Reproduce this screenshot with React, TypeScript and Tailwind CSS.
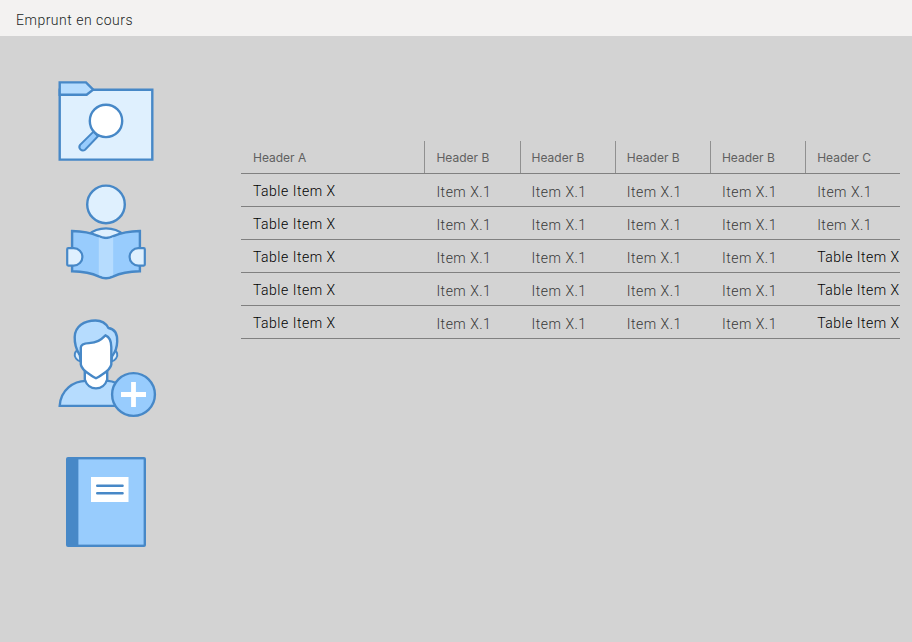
import React from "react";

const BLUE = "#4788c7";

function FolderSearchIcon() {
  return (
    <svg className="block h-[100px] w-[115px]" viewBox="0 0 115 100" fill="none" stroke={BLUE} strokeWidth="2.4">
      <path d="M9.7 19.7H102.3V89.6H9.7Z" fill="#dff0fe" />
      <path d="M9.7 12.4H36L43.2 19.7L36.6 24.8H9.7Z" fill="#b6dcfe" />
      <path d="M43.5 61.6L30.1 74.9A3.5 3.5 0 0 0 35.1 79.7L48 66.2Z" fill="#98ccfd" strokeWidth="2" />
      <circle cx="56" cy="50.9" r="16.2" fill="#fff" />
    </svg>
  );
}

function ReaderIcon() {
  return (
    <svg className="block h-[110px] w-[115px]" viewBox="0 0 115 110" fill="none" stroke={BLUE} strokeWidth="2.4">
      <circle cx="56" cy="29.4" r="18.8" fill="#dff0fe" />
      <path d="M38 60C48 51.2 64 51.2 74 60L56 66Z" fill="#dff0fe" />
      <path d="M22.1 56C31 56.2 41 57.8 48 60.8Q52 63 56 63Q60 63 64 60.8C71 57.8 81 56.2 89.9 56V96.3C81 96.5 70 98.2 63.5 101.3Q59.5 103.2 56 103.2Q52.5 103.2 48.5 101.3C42 98.2 31 96.5 22.1 96.3Z" fill="#98ccfd" />
      <path d="M48.8 62.2Q52.5 64.2 56 64.2Q59.5 64.2 63.2 62.2V100Q59 102 56 102Q53 102 48.8 100Z" fill="#b6dcfe" stroke="none" />
      <path d="M18.2 73.2H23.7A8.7 8.7 0 0 1 23.7 90.6H18.2Q17.2 90.6 17.2 89.6V74.2Q17.2 73.2 18.2 73.2Z" fill="#dff0fe" strokeWidth="2.2" />
      <path d="M93.8 73.2H88.3A8.7 8.7 0 0 0 88.3 90.6H93.8Q94.8 90.6 94.8 89.6V74.2Q94.8 73.2 93.8 73.2Z" fill="#dff0fe" strokeWidth="2.2" />
    </svg>
  );
}

function AddUserIcon() {
  return (
    <svg className="block h-[115px] w-[115px]" viewBox="0 0 115 115" fill="none" stroke={BLUE} strokeWidth="2.4" strokeLinejoin="round">
      <path d="M9.7 95.9C10.6 80 23.5 70.9 36 70.9H58C68 71.5 76 79 80 95.9Z" fill="#b6dcfe" strokeLinejoin="miter" />
      <path d="M34.8 59V69.5C36.5 75 41 78.4 46 78.4S55.5 75 57.2 69.5V59Z" fill="#fff" />
      <path d="M29 40C24.5 40.5 23.6 45.5 26 48.5Q28 51.2 30.5 51.5Z" fill="#dff0fe" strokeWidth="2" />
      <path d="M63 40C67.5 40.5 68.4 45.5 66 48.5Q64 51.2 61.5 51.5Z" fill="#dff0fe" strokeWidth="2" />
      <path d="M29.2 44C25.5 38 24.5 33 24.7 27C25 16.5 34 10.5 45.5 10.5C51.5 10.5 56 13.4 58.4 18C64.5 18.8 67.4 24 67.2 31.5C67 37.5 66 41 62.5 45.5L50 45H36Z" fill="#b6dcfe" />
      <path d="M30.8 37.5C31 34.3 34.5 33.3 39 33.1C47 32.8 50.5 30.2 55.5 25.3C59.5 27 61.3 32 61.3 37V54.5C60.5 59.5 55.5 62.5 51.5 65Q49 66.8 46 68.3Q43 66.8 40.5 65C36.5 62.5 31.5 59.5 30.8 54.5Z" fill="#fff" />
      <circle cx="83.5" cy="84.5" r="21.4" fill="#98ccfd" />
      <path d="M83.5 72V97M71 84.5H96" stroke="#fff" strokeWidth="4.8" />
    </svg>
  );
}

function BookIcon() {
  return (
    <svg className="block h-[110px] w-[115px]" viewBox="0 0 115 110" fill="none">
      <rect x="16" y="12" width="80" height="90" rx="2" fill={BLUE} />
      <rect x="28.4" y="14.4" width="65.2" height="85.2" fill="#98ccfd" />
      <path d="M41 32H78.5V57H41Z" fill="#fff" />
      <path d="M47.2 40.7H72.6M47.2 48.2H72.6" stroke={BLUE} strokeWidth="2.4" strokeLinecap="round" />
    </svg>
  );
}

const columns = ["Header A", "Header B", "Header B", "Header B", "Header B", "Header C"];
const lastColumn = ["Item X.1", "Item X.1", "Table Item X", "Table Item X", "Table Item X"];
const grid = "grid grid-cols-[183.4px_95.2px_95.2px_95.2px_95.2px_94.8px] h-[33px] border-b border-[#808080]";

function Cell({ text }: { text: string }) {
  return text === "Table Item X" ? (
    <span className="whitespace-nowrap pl-3 pt-[7px] leading-5 text-black">{text}</span>
  ) : (
    <span className="whitespace-nowrap pl-3 pt-2 leading-5 text-[#383838]">{text}</span>
  );
}

export default function App() {
  return (
    <div className="flex h-[642px] w-[912px] flex-col overflow-hidden bg-[#d3d3d3] font-['Roboto',sans-serif] text-sm font-light tracking-[0.5px]">
      <header className="flex h-9 shrink-0 items-center bg-[#f3f2f1] px-4 pt-1 text-[#201f1e]">
        <h1>Emprunt en cours</h1>
      </header>
      <main className="flex flex-1">
        <nav className="flex w-[241px] shrink-0 flex-col pl-[50px] pt-[34px]">
          <FolderSearchIcon />
          <div className="mt-[5px]"><ReaderIcon /></div>
          <div className="mt-[25px]"><AddUserIcon /></div>
          <div className="mt-5"><BookIcon /></div>
        </nav>
        <section className="w-[659px] pt-[105px]">
          <div className={grid}>
            {columns.map((name, i) => (
              <span
                key={i}
                className={
                  i === 0
                    ? "pl-3 pt-[9px] font-['Inter',sans-serif] text-xs leading-4 font-normal tracking-normal text-[#606060]"
                    : "border-l border-[#909090] pl-[11px] pt-[9px] font-['Inter',sans-serif] text-xs leading-4 font-normal tracking-normal text-[#606060]"
                }
              >
                {name}
              </span>
            ))}
          </div>
          {lastColumn.map((last, i) => (
            <div key={i} className={grid}>
              {["Table Item X", "Item X.1", "Item X.1", "Item X.1", "Item X.1", last].map((text, j) => (
                <Cell key={j} text={text} />
              ))}
            </div>
          ))}
        </section>
      </main>
    </div>
  );
}
